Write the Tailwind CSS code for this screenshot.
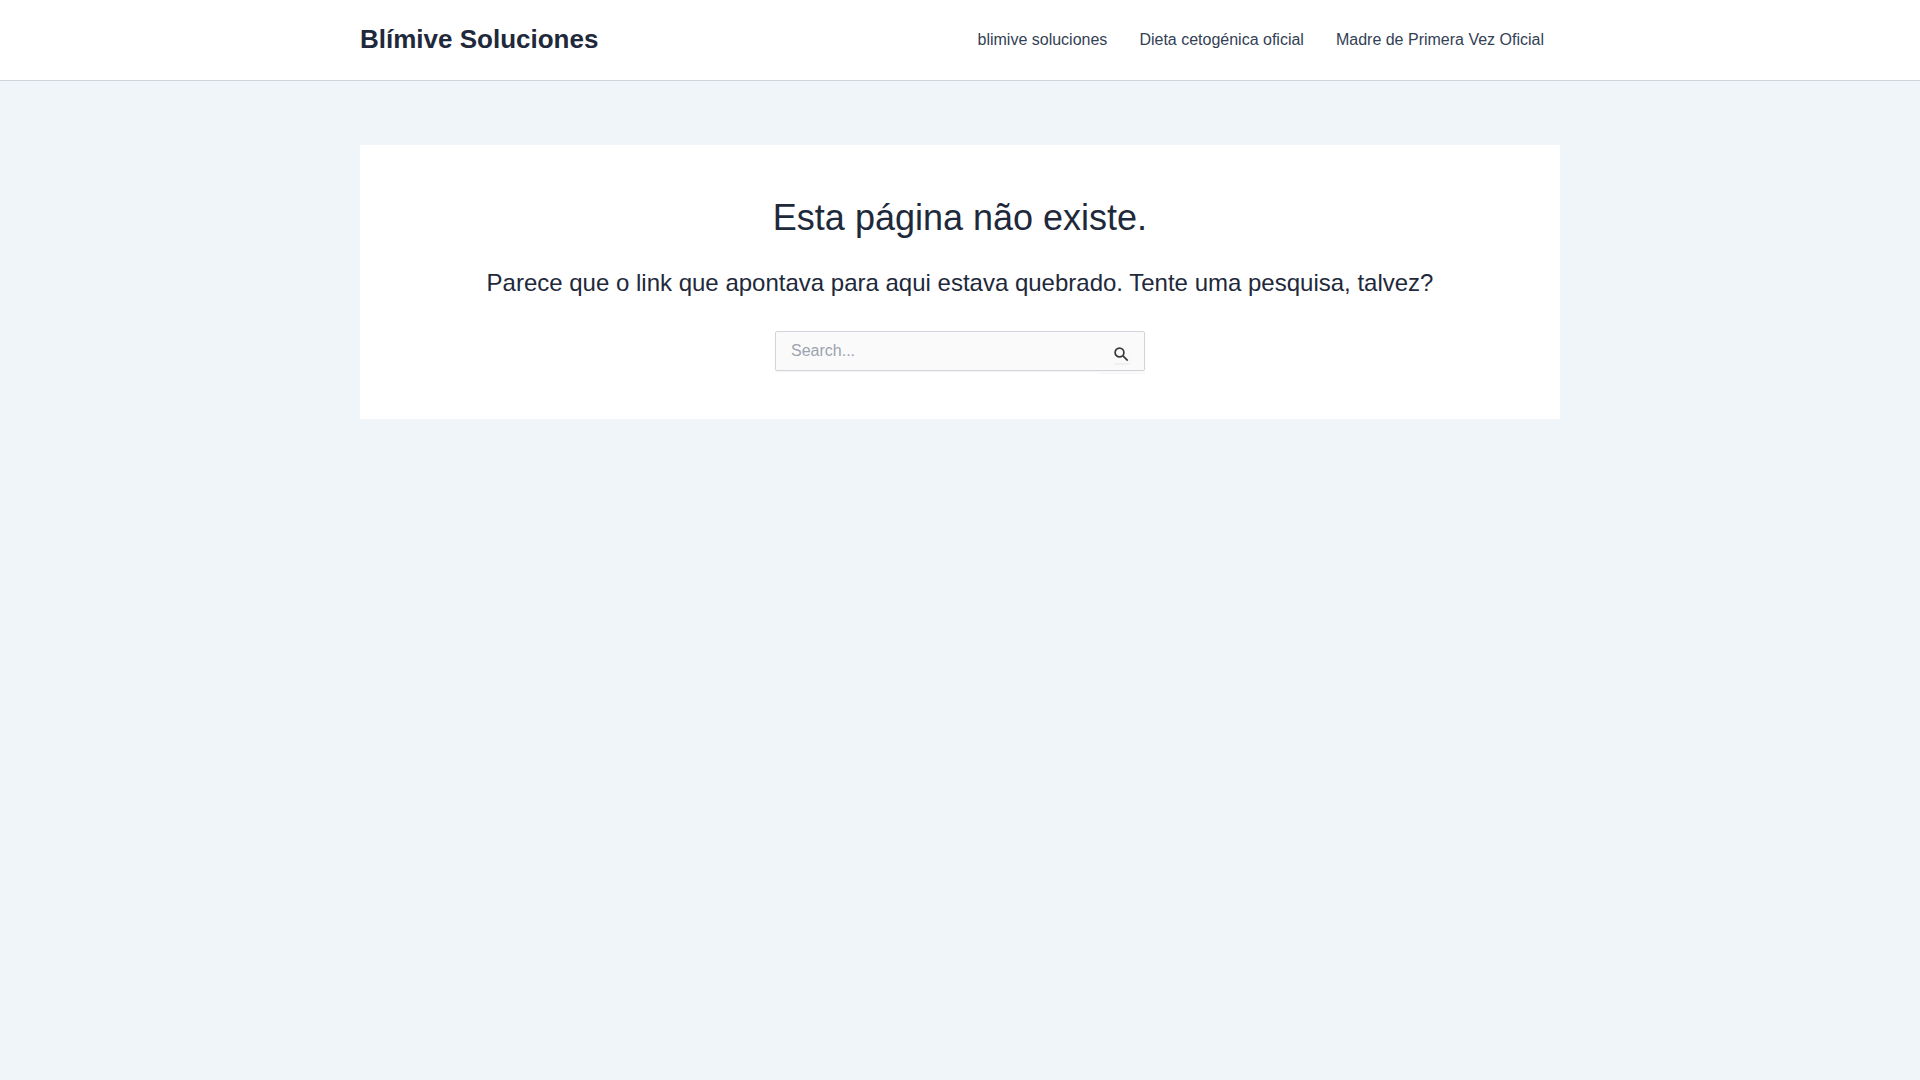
<!DOCTYPE html>
<html lang="pt-BR">
<head>
  <meta charset="UTF-8" />
  <meta name="viewport" content="width=device-width, initial-scale=1.0"/>
  <title>Página não encontrada - Blímive Soluciones</title>
  <script src="https://cdn.jsdelivr.net/npm/@tailwindcss/browser@4"></script>
</head>
<body class="min-h-screen bg-[#f0f5fa] font-['Liberation_Sans',Arial,sans-serif] text-base text-[#334155]">

  <!-- Header -->
  <header class="bg-white border-b border-[#d1d5db]">
    <div class="max-w-[1240px] mx-auto px-5 flex flex-wrap items-center justify-between min-h-20">
      <a href="#" class="pb-0.5 text-[26px] leading-8 font-bold text-[#1e293b]">Blímive Soluciones</a>
      <nav class="flex flex-wrap">
        <a href="#" class="px-4 py-2 hover:text-blue-600">blimive soluciones</a>
        <a href="#" class="px-4 py-2 hover:text-blue-600">Dieta cetogénica oficial</a>
        <a href="#" class="px-4 py-2 hover:text-blue-600">Madre de Primera Vez Oficial</a>
      </nav>
    </div>
  </header>

  <!-- 404 content -->
  <main class="max-w-[1240px] mx-auto px-5 py-16">
    <section class="bg-white p-12 text-center text-[#1e293b]">
      <h1 class="text-4xl leading-[50px]">Esta página não existe.</h1>
      <p class="mt-5 text-2xl leading-10">Parece que o link que apontava para aqui estava quebrado. Tente uma pesquisa, talvez?</p>

      <form role="search" class="relative mt-7 max-w-[370px] mx-auto">
        <label for="search" class="block">
          <input type="search" id="search" aria-label="Pesquisar por:" placeholder="Search..."
                 class="block w-full h-10 pl-[15px] pr-12 bg-[#fafafa] border border-[#d1d5db] rounded-xs shadow-xs placeholder:text-[#9ca3af]">
        </label>
        <button type="submit" aria-label="Pesquisar"
                class="absolute right-0 top-0 h-[42px] w-[46px] pt-1.5 flex items-center justify-center rounded-xs shadow-[0_1px_1px_rgba(0,0,0,0.04)] text-[#3a3a3a]">
          <span class="size-4 rounded-xs shadow-[0_2px_1px_rgba(0,0,0,0.04)]">
            <svg class="size-[15px]" viewBox="0 0 15 15" fill="none" stroke="currentColor" stroke-width="1.7">
              <circle cx="5.5" cy="5.5" r="4.4"/>
              <path d="M8.7 8.7l5 5"/>
            </svg>
          </span>
        </button>
      </form>
    </section>
  </main>

</body>
</html>
